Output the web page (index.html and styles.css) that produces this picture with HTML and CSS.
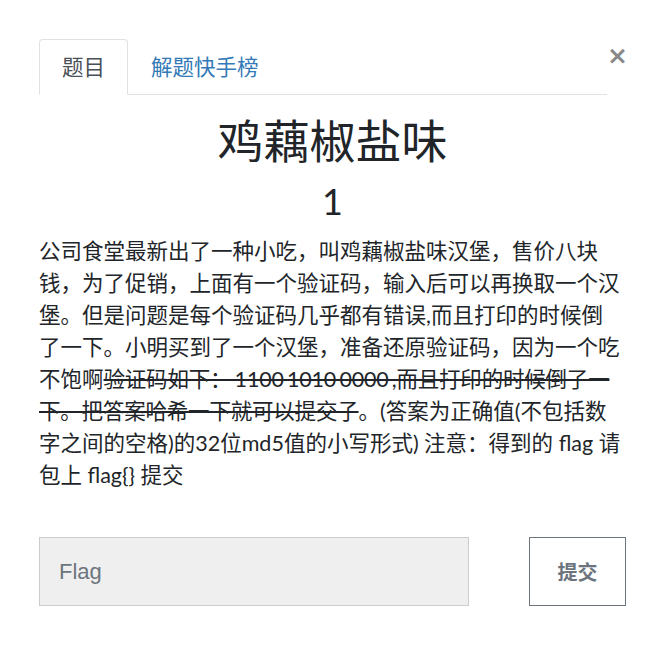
FILE: index.html
```html
<!DOCTYPE html>
<html lang="zh">
<head>
<meta charset="utf-8">
<title>鸡藕椒盐味</title>
<link rel="stylesheet" href="styles.css">
</head>
<body>
<div class="modal">
  <div class="tab-row">
    <ul class="tabs">
      <li class="tab active">题目</li>
      <li class="tab link">解题快手榜</li>
    </ul>
    <button class="close" aria-label="Close">×</button>
  </div>
  <h2 class="title">鸡藕椒盐味</h2>
  <h3 class="points">1</h3>
  <p class="desc">公司食堂最新出了一种小吃，叫鸡藕椒盐味汉堡，售价八块钱，为了促销，上面有一个验证码，输入后可以再换取一个汉堡。但是问题是每个验证码几乎都有错误,而且打印的时候倒了一下。小明买到了一个汉堡，准备还原验证码，因为一个吃不饱啊<del>验证码如下： 1100 1010 0000 ,而且打印的时候倒了一下。把答案哈希一下就可以提交子</del>。(答案为正确值(不包括数字之间的空格)的32位md5值的小写形式) 注意：得到的 flag 请包上 flag{} 提交</p>
  <form class="submit-row">
    <input class="flag-input" type="text" placeholder="Flag">
    <button class="submit" type="button">提交</button>
  </form>
</div>
</body>
</html>
```

FILE: styles.css
```css
html, body {
  margin: 0;
  padding: 0;
  background: #fff;
}
body {
  font-family: Lato, "Noto Sans CJK SC", sans-serif;
  color: #212529;
}
.modal {
  width: 660px;
  box-sizing: border-box;
  padding: 39px 34px 0 39px;
}
.tab-row {
  display: flex;
  align-items: flex-start;
}
.tabs {
  flex: 1;
  display: flex;
  list-style: none;
  margin: 0;
  padding: 0;
  border-bottom: 1px solid #dee2e6;
}
.tab {
  font-size: 21.5px;
  line-height: 32px;
  padding: 11px 22px 11px 22px;
  border: 1px solid transparent;
  border-top-left-radius: 4px;
  border-top-right-radius: 4px;
  margin-bottom: -1px;
}
.tab.active {
  color: #495057;
  border-color: #dee2e6 #dee2e6 #fff;
  background: #fff;
}
.tab.link {
  color: #337ab7;
}
.close {
  width: 19px;
  margin: 4px 0 0 0;
  padding: 0;
  border: 0;
  background: none;
  font-family: "DejaVu Sans", sans-serif;
  font-size: 25px;
  font-weight: bold;
  line-height: 26px;
  color: #888;
  text-align: center;
}
.title {
  margin: 18px 0 0;
  text-align: center;
  font-weight: 400;
  font-size: 46px;
  line-height: 56px;
}
.points {
  margin: 10px 0 0;
  text-align: center;
  font-weight: 400;
  font-size: 36px;
  line-height: 44px;
}
.desc {
  margin: 12px 4px 0 0;
  font-size: 21.5px;
  line-height: 32px;
}
.desc del {
  text-decoration-thickness: 2px;
  word-spacing: -2px;
  letter-spacing: -0.2px;
}
.submit-row {
  display: flex;
  gap: 60px;
  margin-top: 46px;
}
.flag-input {
  width: 430px;
  height: 69px;
  box-sizing: border-box;
  margin: 0;
  padding: 0 19px;
  border: 1px solid #ccc;
  background: #efefef;
  font-family: "Liberation Sans", Arial, sans-serif;
  font-size: 22px;
  color: #495057;
  outline: none;
}
.flag-input::placeholder {
  color: #6c757d;
}
.submit {
  width: 97px;
  height: 69px;
  box-sizing: border-box;
  margin: 0;
  border: 1px solid #6c757d;
  background: #fff;
  color: #6c757d;
  font-family: "Noto Sans CJK SC", sans-serif;
  font-size: 20px;
  font-weight: bold;
}
```
